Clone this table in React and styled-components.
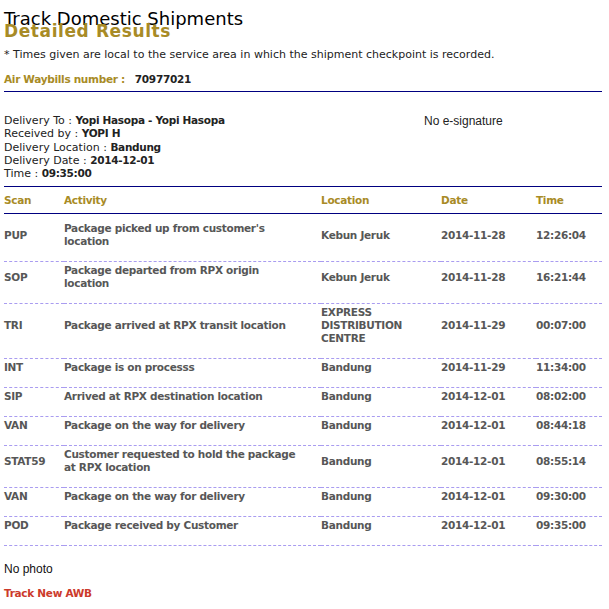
import React from "react";
import styled, { createGlobalStyle, css } from "styled-components";

const Global = createGlobalStyle`
  html, body { margin: 0; padding: 0; background: #fff; }
  body { font-family: "DejaVu Sans", Verdana, sans-serif; }
`;

const GOLD = "#a88b26";
const NAVY = "#000080";

const boldText = css`
  font-weight: bold;
  font-size: 10.5px;
  letter-spacing: -0.3px;
`;

const Page = styled.div`
  padding: 4px 7px 0 4px;
  width: 598px;
`;

const Title = styled.div`
  font-size: 18px;
  line-height: 14px;
  padding-top: 8px;
  color: #000;
`;

const Subtitle = styled.div`
  font-size: 17px;
  font-weight: bold;
  line-height: 18px;
  margin-top: -4px;
  color: ${GOLD};
  letter-spacing: 0.6px;
`;

const Note = styled.div`
  font-size: 11px;
  line-height: 13px;
  color: #222;
  margin-top: 8px;
`;

const AwbLine = styled.div`
  line-height: 13px;
  margin-top: 12px;
  padding-bottom: 5px;
  border-bottom: 1px solid ${NAVY};
  display: flex;
  gap: 10px;
  ${boldText};
`;

const AwbLabel = styled.span`
  color: ${GOLD};
`;

const AwbValue = styled.span`
  color: #222;
`;

const Delivery = styled.div`
  display: flex;
  padding-top: 22px;
  padding-bottom: 6px;
  border-bottom: 1px solid ${NAVY};
`;

const DeliveryInfo = styled.div`
  width: 420px;
  font-size: 11px;
  line-height: 13.25px;
  color: #222;
`;

const InfoValue = styled.b`
  color: #222;
  ${boldText};
`;

const Signature = styled.div`
  font-family: "Liberation Sans", Arial, sans-serif;
  font-size: 12px;
  line-height: 14px;
  color: #222;
`;

const Table = styled.table`
  width: 598px;
  border-collapse: collapse;
  table-layout: fixed;
  ${boldText};
`;

const HeadCell = styled.th`
  text-align: left;
  color: ${GOLD};
  line-height: 13px;
  padding: 7px 0 6px 0;
  border-bottom: 1px solid ${NAVY};
`;

const Cell = styled.td`
  color: #575757;
  line-height: 13px;
  vertical-align: middle;
  border-bottom: 1px dashed #a99cf0;
  padding: ${(p) => (p.$first ? "8px" : "2px")} ${(p) => (p.$wide ? "19px" : "0")} 13px 0;
`;

const Plain = styled.div`
  font-family: "Liberation Sans", Arial, sans-serif;
  font-size: 12px;
  line-height: 14px;
  color: #111;
  margin-top: 16px;
`;

const NewLink = styled.a`
  display: block;
  margin-top: 11px;
  line-height: 13px;
  color: #cc3a2b;
  text-decoration: none;
  ${boldText};
`;

const rows = [
  ["PUP", "Package picked up from customer's location", "Kebun Jeruk", "2014-11-28", "12:26:04"],
  ["SOP", "Package departed from RPX origin location", "Kebun Jeruk", "2014-11-28", "16:21:44"],
  ["TRI", "Package arrived at RPX transit location", "EXPRESS DISTRIBUTION CENTRE", "2014-11-29", "00:07:00"],
  ["INT", "Package is on processs", "Bandung", "2014-11-29", "11:34:00"],
  ["SIP", "Arrived at RPX destination location", "Bandung", "2014-12-01", "08:02:00"],
  ["VAN", "Package on the way for delivery", "Bandung", "2014-12-01", "08:44:18"],
  ["STAT59", "Customer requested to hold the package at RPX location", "Bandung", "2014-12-01", "08:55:14"],
  ["VAN", "Package on the way for delivery", "Bandung", "2014-12-01", "09:30:00"],
  ["POD", "Package received by Customer", "Bandung", "2014-12-01", "09:35:00"],
];

export default function App() {
  return (
    <Page>
      <Global />
      <Title>Track Domestic Shipments</Title>
      <Subtitle>Detailed Results</Subtitle>
      <Note>* Times given are local to the service area in which the shipment checkpoint is recorded.</Note>
      <AwbLine>
        <AwbLabel>Air Waybills number :</AwbLabel>
        <AwbValue>70977021</AwbValue>
      </AwbLine>
      <Delivery>
        <DeliveryInfo>
          <div>Delivery To : <InfoValue>Yopi Hasopa - Yopi Hasopa</InfoValue></div>
          <div>Received by : <InfoValue>YOPI H</InfoValue></div>
          <div>Delivery Location : <InfoValue>Bandung</InfoValue></div>
          <div>Delivery Date : <InfoValue>2014-12-01</InfoValue></div>
          <div>Time : <InfoValue>09:35:00</InfoValue></div>
        </DeliveryInfo>
        <Signature>No e-signature</Signature>
      </Delivery>
      <Table>
        <colgroup>
          <col style={{ width: 60 }} />
          <col style={{ width: 257 }} />
          <col style={{ width: 120 }} />
          <col style={{ width: 95 }} />
          <col style={{ width: 66 }} />
        </colgroup>
        <thead>
          <tr>
            <HeadCell>Scan</HeadCell>
            <HeadCell>Activity</HeadCell>
            <HeadCell>Location</HeadCell>
            <HeadCell>Date</HeadCell>
            <HeadCell>Time</HeadCell>
          </tr>
        </thead>
        <tbody>
          {rows.map((r, i) => (
            <tr key={i}>
              {r.map((c, j) => (
                <Cell key={j} $first={i === 0} $wide={j === 1}>{c}</Cell>
              ))}
            </tr>
          ))}
        </tbody>
      </Table>
      <Plain>No photo</Plain>
      <NewLink href="#">Track New AWB</NewLink>
    </Page>
  );
}
